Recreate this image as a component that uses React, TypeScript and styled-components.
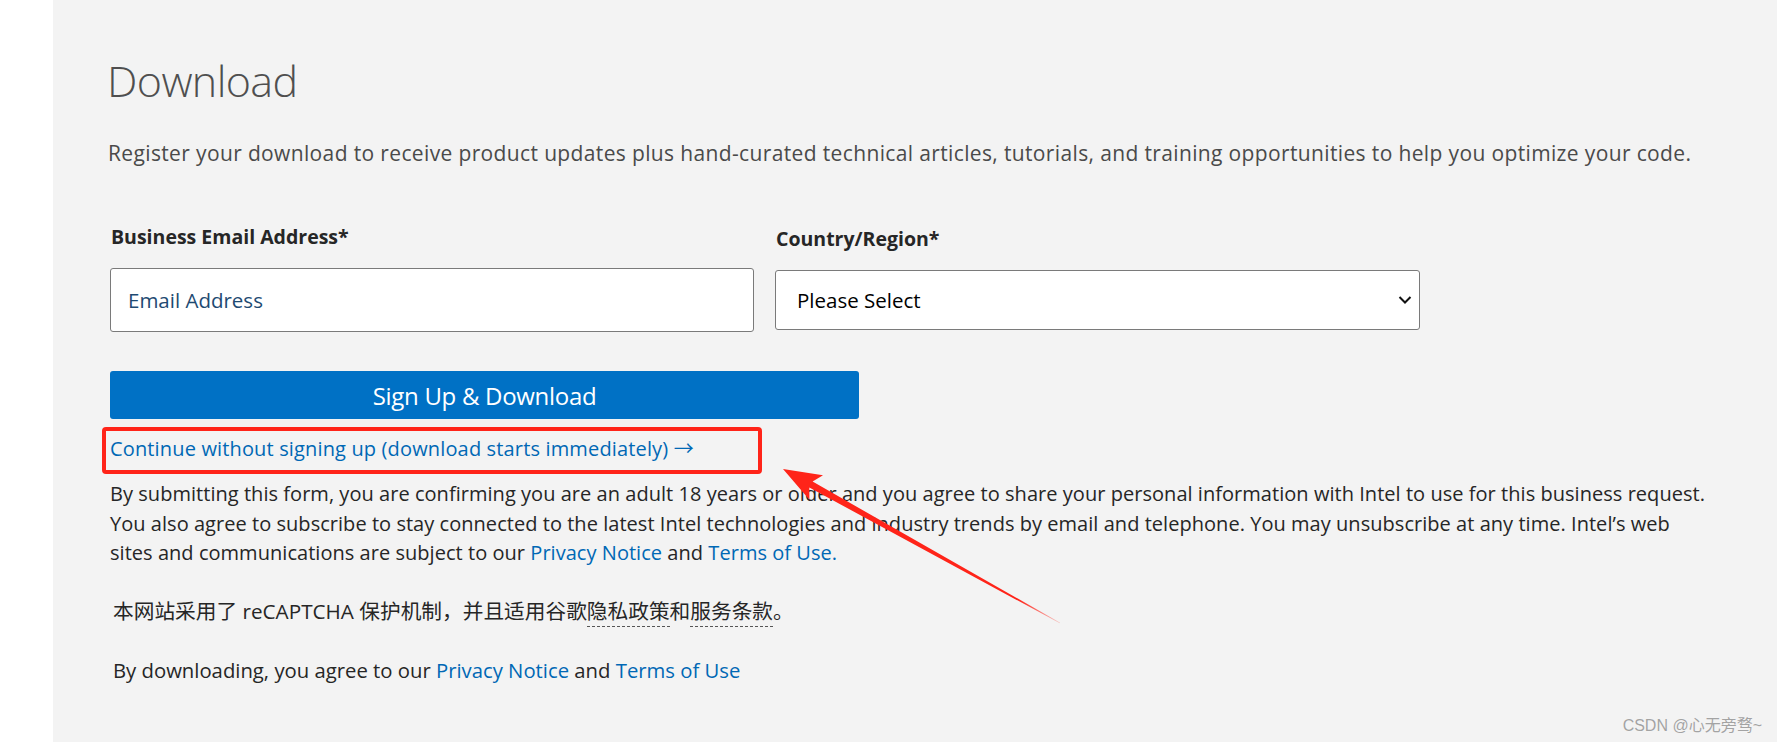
import React from "react";
import styled, { createGlobalStyle } from "styled-components";

const GlobalStyle = createGlobalStyle`
  html, body {
    margin: 0;
    padding: 0;
    background: #ffffff;
  }
  body {
    font-family: "Open Sans", "Noto Sans CJK SC", sans-serif;
    -webkit-font-smoothing: antialiased;
  }
  * { box-sizing: border-box; }
`;

const Page = styled.div`
  position: relative;
  display: flex;
  width: 100%;
  min-height: 742px;
  overflow: hidden;
`;

const LeftGutter = styled.div`
  flex: 0 0 53px;
  background: #ffffff;
`;

const Main = styled.main`
  flex: 1;
  background: #f3f3f3;
  padding: 55px 0 0 57px;
  display: flex;
  flex-direction: column;
  align-items: flex-start;
`;

const Title = styled.h1`
  margin: 0 0 0 -3px;
  font-size: 43px;
  line-height: 52px;
  font-weight: 300;
  color: #4f4f4f;
  letter-spacing: -0.6px;
`;

const Intro = styled.p`
  margin: 32px 0 0 -2px;
  font-size: 21px;
  line-height: 28px;
  letter-spacing: 0.36px;
  color: #4a4a4a;
  white-space: nowrap;
`;

const FieldRow = styled.div`
  margin-top: 58px;
  display: flex;
  gap: 21px;
`;

const Field = styled.div<{ $offset?: number }>`
  display: flex;
  flex-direction: column;
  width: 644px;
  margin-top: ${(p) => p.$offset ?? 0}px;
`;

const Label = styled.label`
  font-size: 19.5px;
  line-height: 24px;
  font-weight: 700;
  color: #262626;
  padding-left: 1px;
`;

const TextInput = styled.input`
  margin-top: 19px;
  height: 64px;
  width: 100%;
  border: 1px solid #7a7a7a;
  border-radius: 3px;
  background: #ffffff;
  padding: 0 17px;
  font-family: "Open Sans", sans-serif;
  font-size: 20.5px;
  color: #1e4a72;
  outline: none;
  &::placeholder {
    color: #1e4a72;
    opacity: 1;
  }
`;

const SelectWrap = styled.div`
  position: relative;
  margin-top: 19px;
  width: 645px;
`;

const Select = styled.select`
  appearance: none;
  -webkit-appearance: none;
  width: 100%;
  height: 60px;
  border: 1px solid #7a7a7a;
  border-radius: 3px;
  background: #ffffff;
  padding: 0 21px;
  font-family: "Open Sans", sans-serif;
  font-size: 20.5px;
  color: #000000;
  outline: none;
`;

const Chevron = styled.svg`
  position: absolute;
  right: 8px;
  top: 50%;
  transform: translateY(-50%);
  pointer-events: none;
`;

const PrimaryButton = styled.button`
  margin-top: 39px;
  width: 749px;
  height: 48px;
  border: none;
  border-radius: 3px;
  background: #0071c5;
  color: #ffffff;
  font-family: "Open Sans", sans-serif;
  font-size: 24px;
  font-weight: 400;
  letter-spacing: -0.3px;
  cursor: pointer;
`;

const HighlightBox = styled.div`
  margin: 8px 0 0 -8px;
  width: 660px;
  height: 47px;
  border: 4px solid #ff2419;
  border-radius: 4px;
  padding-left: 4px;
`;

const TextLink = styled.a`
  display: block;
  font-size: 20px;
  line-height: 36px;
  letter-spacing: 0.15px;
  color: #0068b5;
  text-decoration: none;
  white-space: nowrap;
`;

const Consent = styled.p`
  margin: 5px 0 0 0;
  font-size: 20px;
  line-height: 29.5px;
  letter-spacing: 0.04px;
  color: #262626;
  white-space: nowrap;
`;

const InlineLink = styled.a`
  color: #0068b5;
  text-decoration: none;
`;

const Recaptcha = styled.p`
  margin: 29px 0 0 3px;
  font-size: 20.7px;
  line-height: 29.5px;
  color: #262626;
  white-space: nowrap;
`;

const DottedTerm = styled.span`
  border-bottom: 1px dashed #555555;
  padding-bottom: 1px;
`;

const Agreement = styled.p`
  margin: 30px 0 0 3px;
  font-size: 20.3px;
  line-height: 29.5px;
  color: #262626;
  white-space: nowrap;
`;

const Annotation = styled.svg`
  position: absolute;
  left: 0;
  top: 0;
  pointer-events: none;
`;

const Watermark = styled.div`
  position: absolute;
  right: 15px;
  bottom: 6px;
  font-family: "Liberation Sans", "Noto Sans CJK SC", sans-serif;
  font-size: 16px;
  color: #a3a3a3;
  text-shadow: 0 0 1px rgba(255, 255, 255, 0.9);
  pointer-events: none;
`;

// Red annotation arrow geometry (page coordinates)
const tip = { x: 783, y: 469 };
const tail = { x: 1060, y: 623 };
const dx = tip.x - tail.x;
const dy = tip.y - tail.y;
const len = Math.hypot(dx, dy);
const ux = dx / len;
const uy = dy / len;
const nx = -uy;
const ny = ux;
const headLen = 38;
const headHalf = 14;
const neckBack = 32;
const neckHalf = 3.4;
const pt = (x: number, y: number) => `${x.toFixed(1)},${y.toFixed(1)}`;
const base = { x: tip.x - ux * headLen, y: tip.y - uy * headLen };
const neck = { x: tip.x - ux * neckBack, y: tip.y - uy * neckBack };
const arrowPoints = [
  pt(tip.x, tip.y),
  pt(base.x + nx * headHalf, base.y + ny * headHalf),
  pt(neck.x + nx * neckHalf, neck.y + ny * neckHalf),
  pt(tail.x + nx * 0.4, tail.y + ny * 0.4),
  pt(tail.x - nx * 0.4, tail.y - ny * 0.4),
  pt(neck.x - nx * neckHalf, neck.y - ny * neckHalf),
  pt(base.x - nx * headHalf, base.y - ny * headHalf),
].join(" ");

export default function App() {
  return (
    <>
      <GlobalStyle />
      <Page>
        <LeftGutter />
        <Main>
          <Title>Download</Title>
          <Intro>
            Register your download to receive product updates plus hand-curated technical articles, tutorials, and
            training opportunities to help you optimize your code.
          </Intro>
          <FieldRow>
            <Field>
              <Label>Business Email Address*</Label>
              <TextInput type="email" placeholder="Email Address" />
            </Field>
            <Field $offset={2}>
              <Label>Country/Region*</Label>
              <SelectWrap>
                <Select defaultValue="">
                  <option value="">Please Select</option>
                </Select>
                <Chevron width="14" height="9" viewBox="0 0 14 9">
                  <path d="M1.5 1.5 L7 7 L12.5 1.5" fill="none" stroke="#111" strokeWidth="2" />
                </Chevron>
              </SelectWrap>
            </Field>
          </FieldRow>
          <PrimaryButton>Sign Up &amp; Download</PrimaryButton>
          <HighlightBox>
            <TextLink href="#">Continue without signing up (download starts immediately) →</TextLink>
          </HighlightBox>
          <Consent>
            By submitting this form, you are confirming you are an adult 18 years or older and you agree to share your
            personal information with Intel to use for this business request.
            <br />
            You also agree to subscribe to stay connected to the latest Intel technologies and industry trends by email
            and telephone. You may unsubscribe at any time. Intel’s web
            <br />
            sites and communications are subject to our <InlineLink href="#">Privacy Notice</InlineLink> and{" "}
            <InlineLink href="#">Terms of Use.</InlineLink>
          </Consent>
          <Recaptcha>
            本网站采用了 reCAPTCHA 保护机制，并且适用谷歌<DottedTerm>隐私政策</DottedTerm>和
            <DottedTerm>服务条款</DottedTerm>。
          </Recaptcha>
          <Agreement>
            By downloading, you agree to our <InlineLink href="#">Privacy Notice</InlineLink> and{" "}
            <InlineLink href="#">Terms of Use</InlineLink>
          </Agreement>
        </Main>
        <Annotation width="1777" height="742" viewBox="0 0 1777 742">
          <defs>
            <linearGradient id="arrowFade" gradientUnits="userSpaceOnUse" x1={tip.x} y1={tip.y} x2={tail.x} y2={tail.y}>
              <stop offset="0" stopColor="#ff2419" />
              <stop offset="0.85" stopColor="#ff2419" />
              <stop offset="1" stopColor="#ff2419" stopOpacity="0.2" />
            </linearGradient>
          </defs>
          <polygon points={arrowPoints} fill="url(#arrowFade)" />
        </Annotation>
        <Watermark>CSDN @心无旁骛~</Watermark>
      </Page>
    </>
  );
}
